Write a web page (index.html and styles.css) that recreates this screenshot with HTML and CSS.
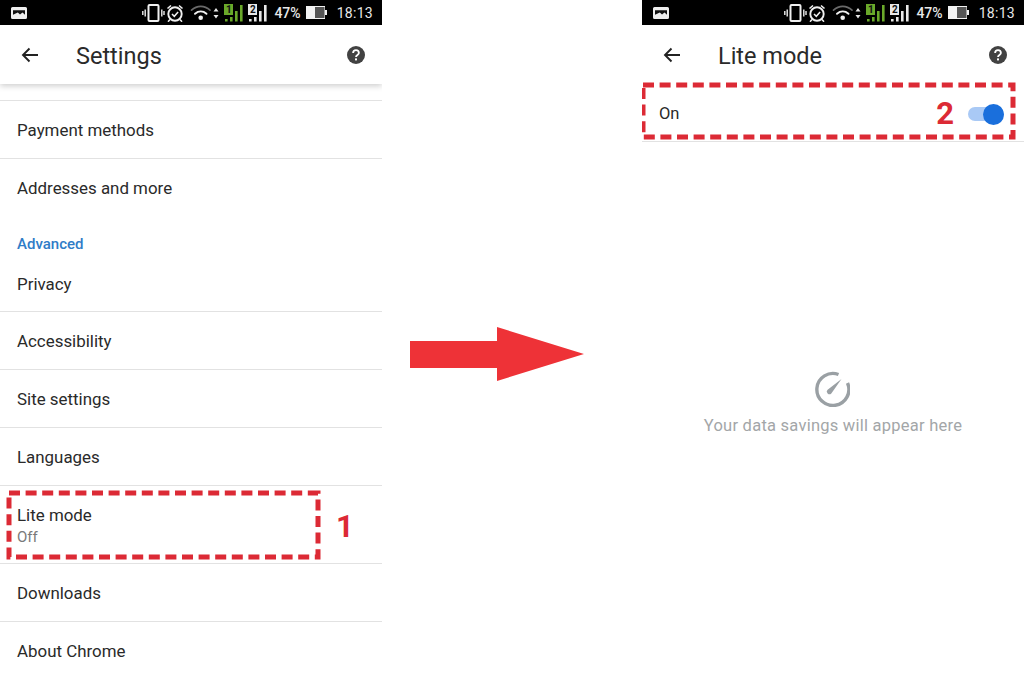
FILE: index.html
```html
<!DOCTYPE html>
<html lang="en">
<head>
<meta charset="utf-8">
<title>Lite mode</title>
<link rel="stylesheet" href="styles.css">
</head>
<body>
<svg class="defs" width="0" height="0" aria-hidden="true">
  <symbol id="status-icons" viewBox="0 0 130 18">
    <g fill="none" stroke="#f0f0f0">
      <rect x="6.500" y="1" width="10" height="16" rx="1" stroke-width="2"/>
      <path d="M3.200 5.500v7M0.800 7v4M19.800 5.500v7M22 7v4" stroke-width="1.400"/>
      <circle cx="33" cy="10" r="6.700" stroke-width="1.900"/>
      <path d="M30 10l2.300 2.300 3.800-4.400" stroke-width="1.500"/>
      <path d="M25.500 4.500l3.500-3M40.500 4.500l-3.500-3M28 15.500l-2 2.200M38 15.500l2 2.200" stroke-width="1.600"/>
    </g>
    <g fill="none" stroke-linecap="round">
      <path d="M49.500 6.200c5.500-5 13-5 18.500 0" stroke="#6a6a6a" stroke-width="1.700"/>
      <path d="M53 9.800c3.500-3 8-3 11.500 0" stroke="#f0f0f0" stroke-width="1.900"/>
    </g>
    <circle cx="58.700" cy="13.800" r="2.300" fill="#f0f0f0"/>
    <path d="M71.500 7.500l2.500-3.500 2.500 3.500zM71.500 11l2.500 3.500 2.500-3.500z" fill="#e6e6e6"/>
  </symbol>
  <symbol id="sim-bars" viewBox="0 0 20 18">
    <rect x="1" y="15" width="2.600" height="2.500"/>
    <rect x="6" y="13" width="2.600" height="4.500"/>
    <rect x="11" y="7" width="2.600" height="10.500"/>
    <rect x="16" y="1" width="2.600" height="16.500"/>
  </symbol>
</svg>

<main class="stage">
  <section class="phone">
    <header class="status">
      <svg class="status-photo" viewBox="0 0 16 12"><path fill="#eee" d="M0 1.500A1.500 1.500 0 0 1 1.500 0h13A1.500 1.500 0 0 1 16 1.500v9a1.500 1.500 0 0 1-1.500 1.500h-13A1.500 1.500 0 0 1 0 10.500z"/><path fill="#111" d="M2 3.200h12v4.600l-2.500-2.200-2.500 1.800-2.200-1.800L2 7.800z"/></svg>
      <div class="status-right">
        <svg class="status-icons"><use href="#status-icons"/></svg>
        <div class="sim sim-green"><span class="sim-num">1</span><svg class="sim-svg"><use href="#sim-bars"/></svg></div>
        <div class="sim"><span class="sim-num">2</span><svg class="sim-svg"><use href="#sim-bars"/></svg></div>
        <span class="status-text">47%</span>
        <svg class="battery" viewBox="0 0 21 13"><rect width="19" height="13" fill="#f2f2f2"/><rect x="9" y="1" width="9.500" height="11" fill="#555"/><rect x="19" y="4" width="2" height="5" fill="#f2f2f2"/></svg>
        <span class="status-time">18:13</span>
      </div>
    </header>
    <div class="toolbar toolbar-raised">
      <svg class="back" viewBox="0 0 18 16"><path d="M17 8H2M8.500 1.500L2 8l6.500 6.500" fill="none" stroke="#222" stroke-width="1.900"/></svg>
      <h1 class="title">Settings</h1>
      <svg class="help" viewBox="0 0 18 18"><circle cx="9" cy="9" r="9" fill="#424242"/><path d="M6.100 7a2.900 2.900 0 0 1 5.800 0c0 1.900-2.900 2-2.900 4" fill="none" stroke="#fff" stroke-width="1.800"/><rect x="8" y="12.400" width="2" height="2" fill="#fff"/></svg>
    </div>
    <ul class="list">
      <li class="row"><span class="row-title">Payment methods</span></li>
      <li class="row row-plain"><span class="row-title">Addresses and more</span></li>
      <li class="section">Advanced</li>
      <li class="row row-after-section"><span class="row-title">Privacy</span></li>
      <li class="row"><span class="row-title">Accessibility</span></li>
      <li class="row"><span class="row-title">Site settings</span></li>
      <li class="row"><span class="row-title">Languages</span></li>
      <li class="row row-double"><span class="row-title">Lite mode</span><span class="row-sub">Off</span></li>
      <li class="row"><span class="row-title">Downloads</span></li>
      <li class="row row-plain"><span class="row-title">About Chrome</span></li>
    </ul>
    <svg class="dash dash-one" viewBox="0 0 316 70"><rect x="3" y="3" width="309" height="64" fill="none" stroke="#dc2a35" stroke-width="5" stroke-dasharray="11 5.600"/></svg>
    <span class="mark mark-one">1</span>
  </section>

  <div class="arrow-wrap">
    <svg class="arrow" viewBox="0 0 174 54"><path d="M0 14H87V0L174 27 87 54V41H0z" fill="#ee3237"/></svg>
  </div>

  <section class="phone">
    <header class="status">
      <svg class="status-photo" viewBox="0 0 16 12"><path fill="#eee" d="M0 1.500A1.500 1.500 0 0 1 1.500 0h13A1.500 1.500 0 0 1 16 1.500v9a1.500 1.500 0 0 1-1.500 1.500h-13A1.500 1.500 0 0 1 0 10.500z"/><path fill="#111" d="M2 3.200h12v4.600l-2.500-2.200-2.500 1.800-2.200-1.800L2 7.800z"/></svg>
      <div class="status-right">
        <svg class="status-icons"><use href="#status-icons"/></svg>
        <div class="sim sim-green"><span class="sim-num">1</span><svg class="sim-svg"><use href="#sim-bars"/></svg></div>
        <div class="sim"><span class="sim-num">2</span><svg class="sim-svg"><use href="#sim-bars"/></svg></div>
        <span class="status-text">47%</span>
        <svg class="battery" viewBox="0 0 21 13"><rect width="19" height="13" fill="#f2f2f2"/><rect x="9" y="1" width="9.500" height="11" fill="#555"/><rect x="19" y="4" width="2" height="5" fill="#f2f2f2"/></svg>
        <span class="status-time">18:13</span>
      </div>
    </header>
    <div class="toolbar">
      <svg class="back" viewBox="0 0 18 16"><path d="M17 8H2M8.500 1.500L2 8l6.500 6.500" fill="none" stroke="#222" stroke-width="1.900"/></svg>
      <h1 class="title">Lite mode</h1>
      <svg class="help" viewBox="0 0 18 18"><circle cx="9" cy="9" r="9" fill="#424242"/><path d="M6.100 7a2.900 2.900 0 0 1 5.800 0c0 1.900-2.900 2-2.900 4" fill="none" stroke="#fff" stroke-width="1.800"/><rect x="8" y="12.400" width="2" height="2" fill="#fff"/></svg>
    </div>
    <div class="toggle-row">
      <span class="row-title">On</span>
      <span class="mark mark-two">2</span>
      <span class="switch"><span class="switch-knob"></span></span>
    </div>
    <div class="empty">
      <svg class="gauge" viewBox="0 0 36 36"><path d="M24.500 3.500A16 16 0 1 0 33.500 12" fill="none" stroke="#9aa0a4" stroke-width="3.400"/><path d="M13.600 18.700L27.500 8 17.300 22.400a2.600 2.600 0 0 1-3.700-3.700z" fill="#9aa0a4"/></svg>
      <p class="empty-text">Your data savings will appear here</p>
    </div>
    <svg class="dash dash-two" viewBox="0 0 376 58"><rect x="3" y="3" width="370" height="52" fill="none" stroke="#dc2a35" stroke-width="5" stroke-dasharray="11 5.600"/></svg>
  </section>
</main>
</body>
</html>
```
FILE: styles.css
```css
* { box-sizing: border-box; }
html, body { margin: 0; padding: 0; background: #fff; }
body { width: 1024px; height: 679px; overflow: hidden; font-family: Roboto, "Liberation Sans", sans-serif; color: #212121; }
.defs { position: absolute; }
.stage { display: flex; height: 679px; }
.phone { position: relative; width: 382px; flex: none; height: 679px; overflow: hidden; }

.status { height: 25px; background: #000; display: flex; align-items: center; justify-content: space-between; padding: 0 9px 0 11px; }
.status-photo { width: 16px; height: 12px; }
.status-right { display: flex; align-items: center; }
.status-icons { width: 130px; height: 18px; margin-right: -48px; }
.sim { position: relative; width: 20px; height: 18px; margin-right: 6px; fill: #e8e8e8; }
.sim-green { fill: #6aa92a; margin-right: 4px; }
.sim-svg { width: 20px; height: 18px; display: block; }
.sim-num { position: absolute; left: 0; top: 0; width: 9px; height: 11px; background: #e8e8e8; color: #111; font-size: 10px; line-height: 11px; font-weight: 700; text-align: center; }
.sim-green .sim-num { background: #6aa92a; }
.status-text { color: #e8e8e8; font-size: 14px; font-weight: 500; margin-right: 5px; }
.battery { width: 21px; height: 13px; margin-right: 10px; }
.status-time { color: #e8e8e8; font-size: 14px; letter-spacing: .3px; }

.toolbar { height: 59px; display: flex; align-items: center; padding-left: 21px; padding-right: 17px; background: #fff; }
.toolbar-raised { box-shadow: 0 2px 6px rgba(0, 0, 0, .2); position: relative; }
.back { width: 18px; height: 16px; flex: none; }
.title { margin: 0 0 0 37px; padding-top: 2px; font-weight: 400; font-size: 23.500px; color: #2a2a2a; flex: 1; }
.help { width: 18px; height: 18px; flex: none; }

.list { list-style: none; margin: 16px 0 0; padding: 0; border-top: 1px solid #e2e2e2; }
.row { height: 58px; display: flex; flex-direction: column; justify-content: center; padding-left: 17px; border-bottom: 1px solid #e2e2e2; }
.row-plain { border-bottom: 0; }
.row-title { font-size: 16.900px; color: #2a2a2a; }
.row-sub { font-size: 15px; color: #7a7a7a; margin-top: 3px; }
.row-double { height: 78px; padding-top: 2px; }
.section { height: 39px; padding: 14px 0 0 17px; display: flex; align-items: center; font-size: 15px; font-weight: 500; color: #2f7cc7; }
.row-after-section { height: 56px; }

.dash { position: absolute; }
.dash-one { left: 6px; top: 490px; width: 316px; height: 70px; }
.dash-two { left: -2px; top: 82px; width: 376px; height: 58px; }
.mark { color: #dc2a35; font-size: 31px; font-weight: 700; line-height: 1; }
.mark-one { position: absolute; left: 336px; top: 511px; }

.arrow-wrap { width: 260px; flex: none; display: flex; align-items: center; height: 679px; padding: 28px 0 0 28px; }
.arrow { width: 174px; height: 54px; }

.toggle-row { height: 58px; padding: 2px 20px 0 17px; display: flex; align-items: center; border-bottom: 1px solid #e2e2e2; }
.toggle-row .row-title { flex: 1; font-size: 16.500px; }
.mark-two { margin-right: 14px; }
.switch { position: relative; width: 36px; height: 14px; background: #a9c9f5; border-radius: 7px; }
.switch-knob { position: absolute; right: 0; top: -3px; width: 21px; height: 21px; border-radius: 50%; background: #1a6fdc; }

.empty { display: flex; flex-direction: column; align-items: center; padding-top: 229px; }
.gauge { width: 36px; height: 36px; margin-left: -2px; }
.empty-text { margin: 9px 0 0; font-size: 16.500px; letter-spacing: .24px; color: #a3a6a8; }
```
